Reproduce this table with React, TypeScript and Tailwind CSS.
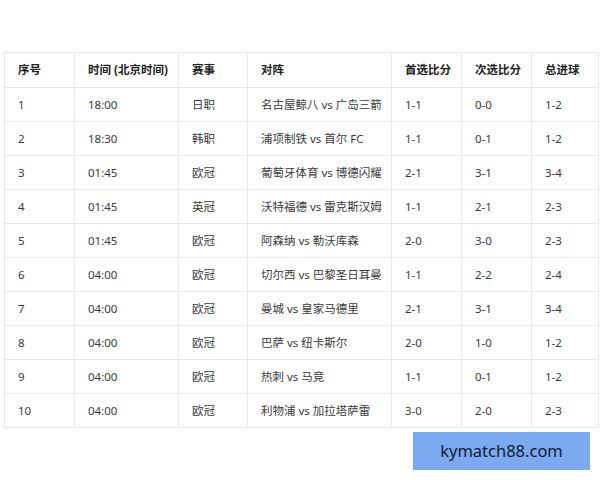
import React from "react";

const rows = [
  ["1", "18:00", "日职", "名古屋鲸八 vs 广岛三箭", "1-1", "0-0", "1-2"],
  ["2", "18:30", "韩职", "浦项制铁 vs 首尔 FC", "1-1", "0-1", "1-2"],
  ["3", "01:45", "欧冠", "葡萄牙体育 vs 博德闪耀", "2-1", "3-1", "3-4"],
  ["4", "01:45", "英冠", "沃特福德 vs 雷克斯汉姆", "1-1", "2-1", "2-3"],
  ["5", "01:45", "欧冠", "阿森纳 vs 勒沃库森", "2-0", "3-0", "2-3"],
  ["6", "04:00", "欧冠", "切尔西 vs 巴黎圣日耳曼", "1-1", "2-2", "2-4"],
  ["7", "04:00", "欧冠", "曼城 vs 皇家马德里", "2-1", "3-1", "3-4"],
  ["8", "04:00", "欧冠", "巴萨 vs 纽卡斯尔", "2-0", "1-0", "1-2"],
  ["9", "04:00", "欧冠", "热刺 vs 马竞", "1-1", "0-1", "1-2"],
  ["10", "04:00", "欧冠", "利物浦 vs 加拉塔萨雷", "3-0", "2-0", "2-3"],
];

const headers = ["序号", "时间 (北京时间)", "赛事", "对阵", "首选比分", "次选比分", "总进球"];
const widths = ["w-[70px]", "w-[104px]", "w-[69px]", "w-[144px]", "w-[70px]", "w-[70px]", "w-[67px]"];

export default function App() {
  return (
    <div
      className="w-[600px] h-[480px] bg-white overflow-hidden text-[#3a3a3a]"
      style={{ fontFamily: '"Noto Sans", "Noto Sans CJK SC", sans-serif' }}
    >
      <div className="pt-[52px] pl-[4px]">
        <table className="border-collapse table-fixed w-[594px] text-[11.5px]">
          <thead>
            <tr className="h-[35px]">
              {headers.map((h, i) => (
                <th
                  key={i}
                  className={`${widths[i]} border border-[#e8e8e8] text-left font-bold pl-[13px] text-[#222] whitespace-nowrap`}
                >
                  {h}
                </th>
              ))}
            </tr>
          </thead>
          <tbody>
            {rows.map((r, ri) => (
              <tr key={ri} className="h-[34px]">
                {r.map((c, ci) => (
                  <td key={ci} className="border border-[#e8e8e8] pl-[13px] whitespace-nowrap">
                    {c}
                  </td>
                ))}
              </tr>
            ))}
          </tbody>
        </table>
      </div>
      <div className="flex justify-end pr-[10px] pt-[4px]">
        <div className="w-[177px] h-[38px] bg-[#7baaf0] flex items-center justify-center text-[16.5px] text-[#141a30]">
          kymatch88.com
        </div>
      </div>
    </div>
  );
}
